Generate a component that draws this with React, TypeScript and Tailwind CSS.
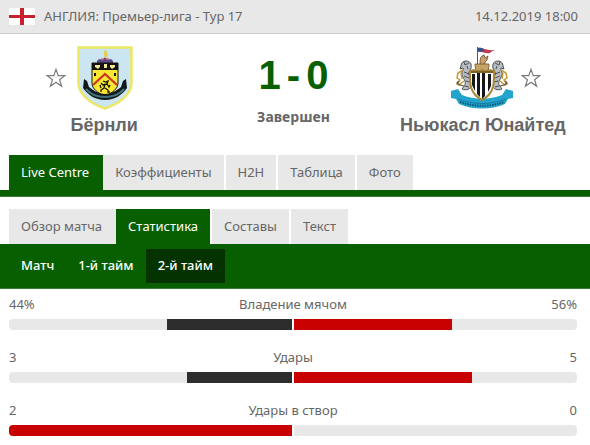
type Stat = { label: string; home: string; away: string; homeShare: number; awayShare: number };

const mainTabs = ["Live Centre", "Коэффициенты", "H2H", "Таблица", "Фото"];
const matchTabs = ["Обзор матча", "Статистика", "Составы", "Текст"];
const periods = ["Матч", "1-й тайм", "2-й тайм"];
const stats: Stat[] = [
  { label: "Владение мячом", home: "44%", away: "56%", homeShare: 44, awayShare: 56 },
  { label: "Удары", home: "3", away: "5", homeShare: 37, awayShare: 63 },
  { label: "Удары в створ", home: "2", away: "0", homeShare: 100, awayShare: 0 },
];

function EnglandFlag() {
  return (
    <svg viewBox="0 0 26 17" className="h-[17px] w-[26px]" role="img" aria-label="Англия">
      <path fill="#fcfcfc" d="M0 0h26v17H0z" />
      <path fill="#c8202f" d="M11 0h4v17h-4zM0 7h26v3H0z" />
    </svg>
  );
}

function Star() {
  return (
    <svg viewBox="0 0 18 18" className="size-5" fill="none" stroke="#7c7c7c" strokeWidth="1.1">
      <path d="M9 1.2l2 5.7h6l-4.8 3.6 1.8 5.8L9 12.8l-5 3.5 1.8-5.8L1 6.9h6z" />
    </svg>
  );
}

function BurnleyCrest() {
  return (
    <svg viewBox="0 0 56 64" className="h-16 w-14" role="img" aria-label="Бёрнли">
      <path d="M1.5 1.5h53V37c0 11-11 20-26.5 25.5C12.5 57 1.5 48 1.5 37z" fill="#cbe5f1" stroke="#ece764" strokeWidth="2.5" />
      <path d="M20 15l2-2 4 1 2-3 2 3 4-1 2 2v2H20z" fill="#5b4a8c" />
      <path d="M27 5l2-1 2 5-2 3-2-2z" fill="#e4cf5a" />
      <path d="M24 13h8" stroke="#c0392b" strokeWidth="1" />
      <path d="M15 17h26v20c0 6-6 10-13 13-7-3-13-7-13-13z" fill="#fae733" stroke="#1b1a14" strokeWidth="1" />
      <path d="M15 17h26v7H15z" fill="#15130e" />
      <path d="M18 19h5v2l-2 2-3-2zM33 19h5v2l-3 2-2-2zM27 18h3v4h-3z" fill="#f3e79a" />
      <path d="M18 27v3M38 27v3" stroke="#15130e" strokeWidth="2" />
      <path d="M16 39l12-11 12 11" fill="none" stroke="#c6371e" strokeWidth="2.2" />
      <path d="M26 35l3 1 2-1-1 3 2 3 1-2M30 38l-4 1-2-2M28 38l-1 4-3 2v2M28 42l3 2v2h2M24 42l-1-3" fill="none" stroke="#15130e" strokeWidth="1.3" />
      <path d="M7 33l3 2 2 6c5 4 10 7 16 7s11-3 16-7l2-6 3-2 1 9c-5 7-12 12-22 12S11 49 6 42z" fill="#11181b" />
      <path d="M9 43c5 6 11 8 19 8s14-2 19-8" fill="none" stroke="#43717b" strokeWidth="2" />
    </svg>
  );
}

function Seahorse() {
  return (
    <g>
      <path d="M11 20c0-3 2-5 5-5 4 0 6 3 5 7-1 3-3 4-2 7 2 4 4 6 3 10-1 4-6 6-10 4 2-3 4-4 3-8-2-4-4-6-3-9 1-2 2-3 1-4l-3 1z" fill="#b9bcc0" stroke="#4a4d52" strokeWidth="1" />
      <path d="M14 16l1 3 4-2M14 26l5 2M14 30l5 2M16 35l4 1M15 40l4 1M17 20l1 3" fill="none" stroke="#4a4d52" strokeWidth="1" />
      <path d="M13 24l-5 3-1 5 3 2-3 4 2 1 5-4M11 27l1 6" fill="none" stroke="#c79a3b" strokeWidth="1.5" />
      <path d="M9 35l-2 2 3 2 4 1" fill="none" stroke="#5c5040" strokeWidth="1.2" />
    </g>
  );
}

function NewcastleCrest() {
  return (
    <svg viewBox="0 0 64 64" className="size-16" role="img" aria-label="Ньюкасл Юнайтед">
      <Seahorse />
      <g transform="matrix(-1 0 0 1 64 0)">
        <Seahorse />
      </g>
      <path d="M27.5 1v22" stroke="#55585e" strokeWidth="1" />
      <path d="M28 2c4-1 7 3 17 2-3 1-4 2-5 3-5 1-8-2-12-1z" fill="#c43a4c" />
      <path d="M28 2c2-.5 4 0 6 1l-1 3c-2-.5-3-.5-5-.2z" fill="#35508c" />
      <path d="M30 18c0-4 0-6 2-8l2-1 1 3 3-2-1 4-2 2v4h-5z" fill="#caa06b" stroke="#68451f" strokeWidth=".8" />
      <path d="M25 18h14v2l-1 5H26l-1-5z" fill="#c7a366" stroke="#6d522b" strokeWidth=".8" />
      <path d="M1 45l7-2 4 6c13 5 27 5 40 0l4-6 7 2v7l-5 1-3 5c-14 6-32 6-46 0l-3-5-5-1z" fill="#23a4cc" />
      <path d="M8 53c15 6 33 6 48 0" fill="none" stroke="#147b9e" strokeWidth="1" />
      <path d="M10 56c14 5 30 5 44 0" fill="none" stroke="#0b5876" strokeWidth="2" strokeDasharray="1.5 1" />
      <path d="M20 25l4-1 3 2 5-2 5 2 3-2 4 1c0 12 1 22-12 29C19 47 20 37 20 25z" fill="#fff" stroke="#a98738" strokeWidth="2" />
      <path d="M22 28h3v17l-3-6zM27 27h3v24l-3-3zM32 27h3v23l-3 3zM38 28h3v12l-3 6z" fill="#17171a" />
      <path d="M21 26h22" stroke="#7a6026" strokeWidth="2" />
    </svg>
  );
}

function Tabs({ items, active }: { items: string[]; active: string }) {
  return (
    <nav className="flex pl-[9px]">
      {items.map((item) => (
        <button
          key={item}
          type="button"
          className={`mr-0.5 h-[35px] px-3 first:mr-0 first:pr-3.5 ${item === active ? "bg-[#085f00] text-white" : "bg-[#e8e8e8] text-[#666]"}`}
        >
          {item}
        </button>
      ))}
    </nav>
  );
}

function StatRow({ label, home, away, homeShare, awayShare }: Stat) {
  const homeColor = homeShare > awayShare ? "bg-[#c80000]" : "bg-[#2d2d2d]";
  return (
    <div>
      <div className="grid grid-cols-[1fr_auto_1fr] leading-5">
        <span>{home}</span>
        <span>{label}</span>
        <span className="text-right">{away}</span>
      </div>
      <div className="mt-[5px] grid grid-cols-2 gap-0.5">
        <div className="flex h-[11px] justify-end overflow-hidden rounded-l bg-[#e8e8e8]">
          <div className={homeColor} style={{ width: `${homeShare}%` }} />
        </div>
        <div className="flex h-[11px] overflow-hidden rounded-r bg-[#e8e8e8]">
          <div className="bg-[#c80000]" style={{ width: `${awayShare}%` }} />
        </div>
      </div>
    </div>
  );
}

export default function App() {
  return (
    <main className="bg-white font-['Noto_Sans',sans-serif] text-[13px] text-[#666]">
      <header className="flex h-[34px] items-center border-b border-[#ccc] bg-[#e8e8e8] pr-3 pl-[9px]">
        <EnglandFlag />
        <span className="ml-[9px]">АНГЛИЯ: Премьер-лига - Тур 17</span>
        <time className="ml-auto">14.12.2019 18:00</time>
      </header>

      <section className="grid grid-cols-[11fr_9fr_11fr] pt-3 pr-[3px] pb-4">
        <div className="flex flex-col items-center">
          <div className="flex items-center gap-[11px] pr-[29px]">
            <button type="button" aria-label="Добавить Бёрнли в избранное"><Star /></button>
            <BurnleyCrest />
          </div>
          <h2 className="pt-px font-['Liberation_Sans',Arial,sans-serif] text-lg leading-7 font-bold">Бёрнли</h2>
        </div>
        <div className="flex flex-col items-center pt-[7px]">
          <p className="flex gap-[6px] font-['Liberation_Sans',Arial,sans-serif] text-[40px] leading-[44px] font-bold text-[#085f00]">
            <span>1</span>
            <span>-</span>
            <span>0</span>
          </p>
          <p className="mt-2.5 text-sm font-bold">Завершен</p>
        </div>
        <div className="flex flex-col items-center">
          <div className="flex items-center gap-[7px] pl-[25px]">
            <NewcastleCrest />
            <button type="button" aria-label="Добавить Ньюкасл Юнайтед в избранное"><Star /></button>
          </div>
          <h2 className="pt-px font-['Liberation_Sans',Arial,sans-serif] text-lg leading-7 font-bold whitespace-nowrap">Ньюкасл Юнайтед</h2>
        </div>
      </section>

      <Tabs items={mainTabs} active="Live Centre" />
      <div className="mb-3 h-[7px] border-b border-[#3d7d38] bg-[#085f00]" />

      <Tabs items={matchTabs} active="Статистика" />
      <nav className="flex h-[45px] items-start border-b border-[#3d7d38] bg-[#085f00] pt-[5px] pl-[9px] text-white">
        {periods.map((period) => (
          <button
            key={period}
            type="button"
            className={`h-[34px] px-3 font-medium ${period === "2-й тайм" ? "bg-[#053300]" : ""}`}
          >
            {period}
          </button>
        ))}
      </nav>

      <section className="flex flex-col gap-[17px] pt-[5px] pr-[13px] pb-[9px] pl-[9px]">
        {stats.map((stat) => (
          <StatRow key={stat.label} {...stat} />
        ))}
      </section>
    </main>
  );
}
